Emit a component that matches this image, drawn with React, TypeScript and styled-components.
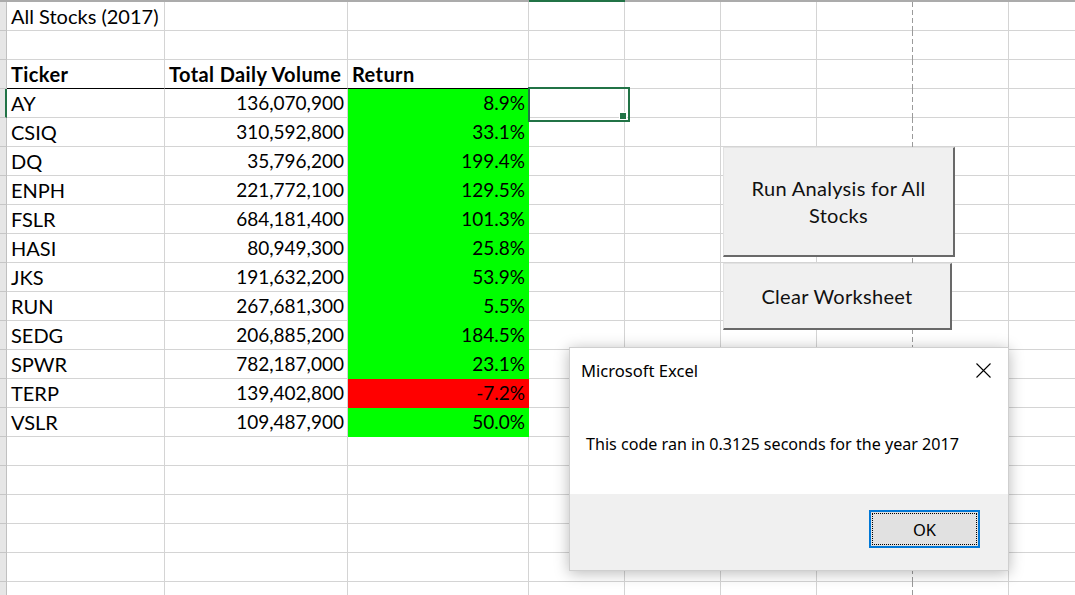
import React from "react";
import styled, { createGlobalStyle, css } from "styled-components";

const GlobalStyle = createGlobalStyle`
  html, body { margin: 0; padding: 0; background: #ffffff; overflow: hidden; }
  * { box-sizing: border-box; }
`;

const COLS = [158, 183, 181, 96, 96, 96, 96, 96, 96];
const GRID = "#d4d4d4";
const GREEN = "#217346";
const CELL_FONT = `"Lato", "Open Sans", sans-serif`;
const UI_FONT = `"Noto Sans", "Open Sans", sans-serif`;

type Stock = { t: string; v: string; r: string; neg?: boolean };
const STOCKS: Stock[] = [
  { t: "AY", v: "136,070,900", r: "8.9%" },
  { t: "CSIQ", v: "310,592,800", r: "33.1%" },
  { t: "DQ", v: "35,796,200", r: "199.4%" },
  { t: "ENPH", v: "221,772,100", r: "129.5%" },
  { t: "FSLR", v: "684,181,400", r: "101.3%" },
  { t: "HASI", v: "80,949,300", r: "25.8%" },
  { t: "JKS", v: "191,632,200", r: "53.9%" },
  { t: "RUN", v: "267,681,300", r: "5.5%" },
  { t: "SEDG", v: "206,885,200", r: "184.5%" },
  { t: "SPWR", v: "782,187,000", r: "23.1%" },
  { t: "TERP", v: "139,402,800", r: "-7.2%", neg: true },
  { t: "VSLR", v: "109,487,900", r: "50.0%" },
];

const Sheet = styled.div`
  position: relative;
  width: 1075px;
  height: 595px;
  overflow: hidden;
  background: #ffffff;
`;

const TopEdge = styled.div`
  display: flex;
  height: 2px;
`;

const EdgeSeg = styled.div<{ $w: number; $active?: boolean }>`
  flex: 0 0 ${(p) => p.$w}px;
  height: 2px;
  background: ${(p) => (p.$active ? GREEN : "#ababab")};
`;

const Row = styled.div`
  display: flex;
  height: 29px;
`;

const RowHead = styled.div<{ $active?: boolean }>`
  flex: 0 0 7px;
  height: 29px;
  background: #e6e6e6;
  border-bottom: 1px solid #c6c6c6;
  border-right: ${(p) => (p.$active ? `2px solid ${GREEN}` : "1px solid #c0c0c0")};
`;

type CellProps = {
  $w: number;
  $align?: "left" | "right";
  $bold?: boolean;
  $num?: boolean;
  $fill?: string;
  $underline?: boolean;
  $pageBreak?: boolean;
  $selected?: boolean;
};

const Cell = styled.div<CellProps>`
  position: relative;
  flex: 0 0 ${(p) => p.$w}px;
  height: 29px;
  padding: 0 3px 0 4px;
  font-family: ${CELL_FONT};
  font-size: ${(p) => (p.$num ? 19 : 20)}px;
  letter-spacing: ${(p) => (p.$bold ? 0.4 : 0)}px;
  line-height: 28px;
  color: #000000;
  white-space: nowrap;
  text-align: ${(p) => p.$align ?? "left"};
  font-weight: ${(p) => (p.$bold ? 700 : 400)};
  background: ${(p) => p.$fill ?? "transparent"};
  border-right: 1px solid ${(p) => p.$fill ?? GRID};
  border-bottom: 1px solid
    ${(p) => (p.$underline ? "#000000" : p.$fill ?? GRID)};
  ${(p) =>
    p.$pageBreak &&
    css`
      border-right-color: transparent;
      &::before {
        content: "";
        position: absolute;
        top: 0;
        right: -1px;
        width: 1px;
        height: 29px;
        background: repeating-linear-gradient(
          to bottom,
          #9a9a9a 0 5px,
          transparent 5px 8px
        );
      }
    `}
  ${(p) =>
    p.$selected &&
    css`
      &::after {
        content: "";
        position: absolute;
        left: -1px;
        top: -2px;
        width: 98px;
        height: 31px;
        border: 2px solid ${GREEN};
        z-index: 2;
      }
      &::before {
        content: "";
        position: absolute;
        right: -3px;
        bottom: -3px;
        width: 6px;
        height: 6px;
        background: ${GREEN};
        border: 1px solid #ffffff;
        z-index: 3;
      }
    `}
`;

const SheetButton = styled.div<{ $left: number; $top: number; $w: number; $h: number }>`
  position: absolute;
  left: ${(p) => p.$left}px;
  top: ${(p) => p.$top}px;
  width: ${(p) => p.$w}px;
  height: ${(p) => p.$h}px;
  display: flex;
  align-items: center;
  justify-content: center;
  text-align: center;
  padding: 0 24px;
  background: #f0f0f0;
  border-top: 1px solid #e2e2e2;
  border-left: 1px solid #e2e2e2;
  border-right: 2px solid #696969;
  border-bottom: 2px solid #696969;
  font-family: ${CELL_FONT};
  font-size: 20px;
  letter-spacing: 0.3px;
  line-height: 27px;
  color: #111111;
  z-index: 4;
`;

const Dialog = styled.div`
  position: absolute;
  left: 569px;
  top: 347px;
  width: 440px;
  height: 224px;
  display: flex;
  flex-direction: column;
  background: #ffffff;
  border: 1px solid #cfcfcf;
  box-shadow: 0 2px 14px rgba(0, 0, 0, 0.28);
  font-family: ${UI_FONT};
  color: #000000;
  z-index: 10;
`;

const TitleBar = styled.div`
  height: 45px;
  display: flex;
  align-items: center;
  justify-content: space-between;
  padding: 0 17px 0 11px;
  font-size: 16.6px;
`;

const CloseIcon = styled.svg`
  width: 15px;
  height: 15px;
  display: block;
`;

const Body = styled.div`
  flex: 1;
  display: flex;
  align-items: center;
  padding: 0 0 0 16px;
  font-size: 16.1px;
`;

const Footer = styled.div`
  height: 76px;
  background: #f0f0f0;
  display: flex;
  justify-content: flex-end;
  align-items: flex-start;
  padding: 16px 28px 0 0;
`;

const OkButton = styled.div`
  width: 111px;
  height: 38px;
  border: 2px solid #0078d7;
  background: #e1e1e1;
  padding: 1px;
  font-size: 16.5px;
`;

const OkFocus = styled.div`
  width: 100%;
  height: 100%;
  border: 1px dotted #000000;
  display: flex;
  align-items: center;
  justify-content: center;
`;

function gridRow(key: number, cells: React.ReactNode[], opts: { activeHead?: boolean } = {}) {
  return (
    <Row key={key}>
      <RowHead $active={opts.activeHead} />
      {cells}
    </Row>
  );
}

export default function App() {
  const rows: React.ReactNode[] = [];
  const blank = (i: number, extra: Partial<CellProps> = {}) => (
    <Cell key={i} $w={COLS[i]} $pageBreak={i === 6} {...extra} />
  );

  rows.push(
    gridRow(1, [
      <Cell key={0} $w={COLS[0]}>All Stocks (2017)</Cell>,
      ...COLS.slice(1).map((_, j) => blank(j + 1)),
    ])
  );
  rows.push(gridRow(2, COLS.map((_, i) => blank(i))));
  rows.push(
    gridRow(3, [
      <Cell key={0} $w={COLS[0]} $bold $underline>Ticker</Cell>,
      <Cell key={1} $w={COLS[1]} $bold $underline>Total Daily Volume</Cell>,
      <Cell key={2} $w={COLS[2]} $bold $underline>Return</Cell>,
      ...COLS.slice(3).map((_, j) => blank(j + 3)),
    ])
  );
  STOCKS.forEach((s, k) => {
    const fill = s.neg ? "#ff0000" : "#00ff00";
    rows.push(
      gridRow(
        4 + k,
        [
          <Cell key={0} $w={COLS[0]}>{s.t}</Cell>,
          <Cell key={1} $w={COLS[1]} $align="right" $num>{s.v}</Cell>,
          <Cell key={2} $w={COLS[2]} $align="right" $num $fill={fill}>{s.r}</Cell>,
          blank(3, k === 0 ? { $selected: true } : {}),
          ...COLS.slice(4).map((_, j) => blank(j + 4)),
        ],
        { activeHead: k === 0 }
      )
    );
  });
  for (let r = 16; r <= 22; r++) {
    rows.push(gridRow(r, COLS.map((_, i) => blank(i))));
  }

  return (
    <>
      <GlobalStyle />
      <Sheet>
        <TopEdge>
          <EdgeSeg $w={7} />
          {COLS.map((w, i) => (
            <EdgeSeg key={i} $w={w} $active={i === 3} />
          ))}
        </TopEdge>
        {rows}

        <SheetButton $left={723} $top={147} $w={232} $h={110}>
          Run Analysis for All Stocks
        </SheetButton>
        <SheetButton $left={723} $top={263} $w={229} $h={67}>
          Clear Worksheet
        </SheetButton>

        <Dialog>
          <TitleBar>
            <span>Microsoft Excel</span>
            <CloseIcon viewBox="0 0 15 15">
              <path d="M0.5 0.5 L14.5 14.5 M14.5 0.5 L0.5 14.5" stroke="#000" strokeWidth="1.1" fill="none" />
            </CloseIcon>
          </TitleBar>
          <Body>This code ran in 0.3125 seconds for the year 2017</Body>
          <Footer>
            <OkButton>
              <OkFocus>OK</OkFocus>
            </OkButton>
          </Footer>
        </Dialog>
      </Sheet>
    </>
  );
}
